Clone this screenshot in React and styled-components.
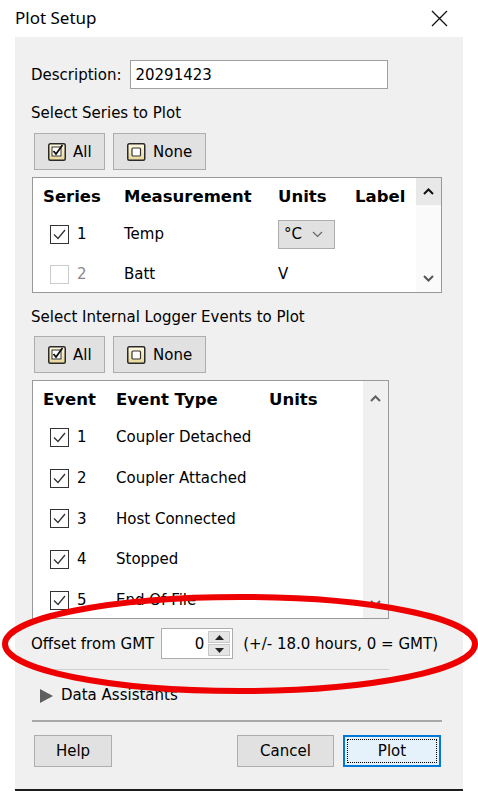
import React from 'react';
import styled, { createGlobalStyle } from 'styled-components';

const GlobalStyle = createGlobalStyle`
  html, body {
    margin:0;
    padding:0;
    background:#fff;
  }
  body {
    font-family:"DejaVu Sans", Verdana, sans-serif;
    font-size:15px;
    color:#000;
  }
`;

const Page = styled.div`
  position:relative;
  width:478px;
  height:791px;
  overflow:hidden;
  display:flex;
  flex-direction:column;
`;

const TitleBar = styled.div`
  height:37px;
  flex:none;
  display:flex;
  align-items:center;
  justify-content:space-between;
  padding:0 30px 0 15px;
  box-sizing:border-box;
`;

const Title = styled.span`
  font-family:"Noto Sans", "Open Sans", sans-serif;
  font-size:17px;
  margin-top:-2px;
`;

const Panel = styled.div`
  flex:1;
  margin:0 15px;
  background:#f0f0f0;
  border-bottom:2px solid #1c1c1c;
  padding:23px 0 0 16px;
  display:flex;
  flex-direction:column;
`;

const Row = styled.div`
  display:flex;
  align-items:center;
  margin-top:${p => p.top || 0}px;
  height:${p => (p.h ? p.h + 'px' : 'auto')};
`;

const TextInput = styled.div`
  margin-left:9px;
  width:258px;
  height:29px;
  box-sizing:border-box;
  background:#fff;
  border:1px solid #a0a0a0;
  display:flex;
  align-items:center;
  padding-left:4px;
`;

const SectionLabel = styled.div`
  margin-top:${p => p.top}px;
  line-height:19px;
`;

const ButtonRow = styled.div`
  display:flex;
  gap:8px;
  padding-left:3px;
  margin-top:${p => p.top}px;
`;

const ToolButton = styled.div`
  width:${p => p.w}px;
  height:37px;
  box-sizing:border-box;
  background:#e1e1e1;
  border:1px solid #adadad;
  display:flex;
  align-items:center;
  padding-left:13px;
  gap:7px;
`;

const TableBox = styled.div`
  margin-top:7px;
  margin-left:1px;
  width:${p => p.w}px;
  height:${p => p.h}px;
  box-sizing:border-box;
  border:1px solid #999;
  background:#fff;
  display:flex;
  overflow:hidden;
`;

const TableBody = styled.div`
  flex:1;
  padding-left:10px;
`;

const TableRow = styled.div`
  display:grid;
  grid-template-columns:${p => p.cols};
  align-items:center;
  height:${p => (p.head ? 36 : p.rh || 40)}px;
`;

const HeadCell = styled.span`
  font-weight:bold;
  font-size:16.5px;
`;

const FirstCell = styled.div`
  display:flex;
  align-items:center;
  padding-left:7px;
  gap:8px;
  color:${p => (p.disabled ? '#8a8a8a' : '#000')};
`;

const Box = styled.div`
  width:19px;
  height:19px;
  box-sizing:border-box;
  background:#fff;
  border:1px solid ${p => (p.disabled ? '#cccccc' : '#333')};
  display:flex;
  align-items:center;
  justify-content:center;
`;

const Scrollbar = styled.div`
  width:25px;
  flex:none;
  background:${p => p.bg};
  display:flex;
  flex-direction:column;
  justify-content:space-between;
  align-items:center;
`;

const ArrowButton = styled.div`
  width:25px;
  height:${p => p.h || 27}px;
  background:${p => p.bg || 'transparent'};
  display:flex;
  align-items:center;
  justify-content:center;
`;

const Dropdown = styled.div`
  width:57px;
  height:29px;
  box-sizing:border-box;
  background:#e1e1e1;
  border:1px solid #adadad;
  display:flex;
  align-items:center;
  padding-left:5px;
  gap:10px;
`;

const Spinner = styled.div`
  margin-left:7px;
  width:72px;
  height:31px;
  box-sizing:border-box;
  background:#fff;
  border:1px solid #adadad;
  display:flex;
  align-items:center;
  justify-content:flex-end;
  padding:2px;
`;

const SpinValue = styled.span`
  margin-right:4px;
`;

const SpinButtons = styled.div`
  width:22px;
  height:100%;
  display:flex;
  flex-direction:column;
  gap:1px;
`;

const SpinButton = styled.div`
  flex:1;
  background:#e5e5e5;
  border:1px solid #c8c8c8;
  display:flex;
  align-items:center;
  justify-content:center;
`;

const Hint = styled.span`
  margin-left:10px;
`;

const Rule = styled.div`
  margin-top:${p => p.top}px;
  width:${p => p.w}px;
  height:${p => p.size || 1}px;
  background:${p => p.color};
  margin-left:1px;
`;

const Expander = styled.div`
  display:flex;
  align-items:center;
  margin-top:${p => p.top}px;
  padding-left:9px;
  gap:8px;
  line-height:19px;
`;

const ButtonBar = styled.div`
  display:flex;
  margin-top:13px;
  padding-left:3px;
  width:410px;
`;

const PushButton = styled.div`
  width:${p => p.w}px;
  height:32px;
  box-sizing:border-box;
  margin-left:${p => p.ml || 0}px;
  background:${p => (p.primary ? '#e5f1fb' : '#e1e1e1')};
  border:${p => (p.primary ? '2px solid #0078d7' : '1px solid #adadad')};
  display:flex;
  align-items:center;
  justify-content:center;
  padding:${p => (p.primary ? '2px' : '0')};
`;

const Focus = styled.div`
  width:100%;
  height:100%;
  box-sizing:border-box;
  border:1px dotted #000;
  display:flex;
  align-items:center;
  justify-content:center;
`;

const Highlight = styled.svg`
  position:absolute;
  left:0;
  top:0;
  pointer-events:none;
`;

const Check = () => (
  <svg width="15" height="15" viewBox="0 0 15 15">
    <polyline points="2,7.5 6,11.5 13,3" fill="none" stroke="#333" strokeWidth="1.3" />
  </svg>
);

const Checkbox = ({ checked, disabled }) => (
  <Box disabled={disabled}>{checked && <Check />}</Box>
);

const AllIcon = () => (
  <svg width="18" height="19" viewBox="0 0 18 19">
    <defs>
      <linearGradient id="ya" x1="0" y1="0" x2="0" y2="1">
        <stop offset="0" stopColor="#fffbe0" />
        <stop offset="1" stopColor="#e9d79a" />
      </linearGradient>
    </defs>
    <rect x="0.75" y="1.75" width="16.5" height="16.5" rx="1.5" fill="url(#ya)" stroke="#2a2a2a" strokeWidth="1.5" />
    <rect x="4" y="5" width="9" height="9" fill="#fff" stroke="#333" strokeWidth="1" />
    <polyline points="5.5,9 8,12 14.5,3" fill="none" stroke="#111" strokeWidth="1.8" />
  </svg>
);

const NoneIcon = () => (
  <svg width="19" height="19" viewBox="0 0 19 19">
    <defs>
      <linearGradient id="yn" x1="0" y1="0" x2="0" y2="1">
        <stop offset="0" stopColor="#fffbe0" />
        <stop offset="1" stopColor="#e9d79a" />
      </linearGradient>
    </defs>
    <rect x="0.75" y="1.75" width="17" height="16.5" rx="1.5" fill="url(#yn)" stroke="#2a2a2a" strokeWidth="1.5" />
    <rect x="5" y="6" width="8.5" height="8" rx="1" fill="#fff" stroke="#333" strokeWidth="1.2" />
  </svg>
);

const Chevron = ({ up, color = '#333', w = 11, sw = 2 }) => (
  <svg width={w} height="7" viewBox="0 0 11 7">
    <polyline
      points={up ? '1,6 5.5,1.5 10,6' : '1,1 5.5,5.5 10,1'}
      fill="none"
      stroke={color}
      strokeWidth={sw}
    />
  </svg>
);

const Triangle = ({ up }) => (
  <svg width="9" height="5" viewBox="0 0 9 5">
    <polygon points={up ? '0,5 4.5,0 9,5' : '0,0 9,0 4.5,5'} fill="#222" />
  </svg>
);

const seriesCols = '81px 154px 77px 61px';
const eventCols = '73px 153px 94px';

const events = [
  'Coupler Detached',
  'Coupler Attached',
  'Host Connected',
  'Stopped',
  'End Of File',
];

const App = () => {
  return <Page>
    <GlobalStyle />
    <TitleBar>
      <Title>Plot Setup</Title>
      <svg width="17" height="17" viewBox="0 0 17 17">
        <path d="M1 1 L16 16 M16 1 L1 16" stroke="#111" strokeWidth="1.3" />
      </svg>
    </TitleBar>
    <Panel>
      <Row h={29}>
        <span>Description:</span>
        <TextInput>20291423</TextInput>
      </Row>

      <SectionLabel top={15}>Select Series to Plot</SectionLabel>
      <ButtonRow top={10}>
        <ToolButton w={71}><AllIcon />All</ToolButton>
        <ToolButton w={93}><NoneIcon />None</ToolButton>
      </ButtonRow>
      <TableBox w={410} h={116}>
        <TableBody>
          <TableRow head cols={seriesCols}>
            <HeadCell>Series</HeadCell>
            <HeadCell>Measurement</HeadCell>
            <HeadCell>Units</HeadCell>
            <HeadCell>Label</HeadCell>
          </TableRow>
          <TableRow cols={seriesCols}>
            <FirstCell><Checkbox checked />1</FirstCell>
            <span>Temp</span>
            <Dropdown>°C<Chevron color="#666" sw={1.2} /></Dropdown>
            <span />
          </TableRow>
          <TableRow cols={seriesCols}>
            <FirstCell disabled><Checkbox disabled />2</FirstCell>
            <span>Batt</span>
            <span>V</span>
            <span />
          </TableRow>
        </TableBody>
        <Scrollbar bg="#fafafa">
          <ArrowButton bg="#e8e8e8" h={27}><Chevron up color="#111" /></ArrowButton>
          <ArrowButton h={27}><Chevron color="#555" /></ArrowButton>
        </Scrollbar>
      </TableBox>

      <SectionLabel top={15}>Select Internal Logger Events to Plot</SectionLabel>
      <ButtonRow top={9}>
        <ToolButton w={71}><AllIcon />All</ToolButton>
        <ToolButton w={93}><NoneIcon />None</ToolButton>
      </ButtonRow>
      <TableBox w={357} h={239}>
        <TableBody>
          <TableRow head cols={eventCols}>
            <HeadCell>Event</HeadCell>
            <HeadCell>Event Type</HeadCell>
            <HeadCell>Units</HeadCell>
          </TableRow>
          {events.map((name, i) => (
            <TableRow key={name} cols={eventCols} rh={40.7}>
              <FirstCell><Checkbox checked />{i + 1}</FirstCell>
              <span>{name}</span>
              <span />
            </TableRow>
          ))}
        </TableBody>
        <Scrollbar bg="#f0f0f0">
          <ArrowButton h={34}><Chevron up color="#606060" /></ArrowButton>
          <ArrowButton h={30}><Chevron color="#606060" /></ArrowButton>
        </Scrollbar>
      </TableBox>

      <Row top={9} h={31}>
        <span>Offset from GMT</span>
        <Spinner>
          <SpinValue>0</SpinValue>
          <SpinButtons>
            <SpinButton><Triangle up /></SpinButton>
            <SpinButton><Triangle /></SpinButton>
          </SpinButtons>
        </Spinner>
        <Hint>(+/- 18.0 hours, 0 = GMT)</Hint>
      </Row>
      <Rule top={10} w={357} color="#d0d0d0" />

      <Expander top={16}>
        <svg width="13" height="14" viewBox="0 0 13 14">
          <polygon points="0,0 13,7 0,14" fill="#5f5f5f" />
        </svg>
        <span>Data Assistants</span>
      </Expander>
      <Rule top={15} w={410} size={2} color="#a8a8a8" />

      <ButtonBar>
        <PushButton w={78}>Help</PushButton>
        <PushButton w={97} ml={125}>Cancel</PushButton>
        <PushButton w={98} ml={9} primary><Focus>Plot</Focus></PushButton>
      </ButtonBar>
    </Panel>

    <Highlight width="478" height="791">
      <ellipse cx="240" cy="644" rx="235" ry="47" fill="none" stroke="#ee0000" strokeWidth="6" />
    </Highlight>
  </Page>
}

export default App;
